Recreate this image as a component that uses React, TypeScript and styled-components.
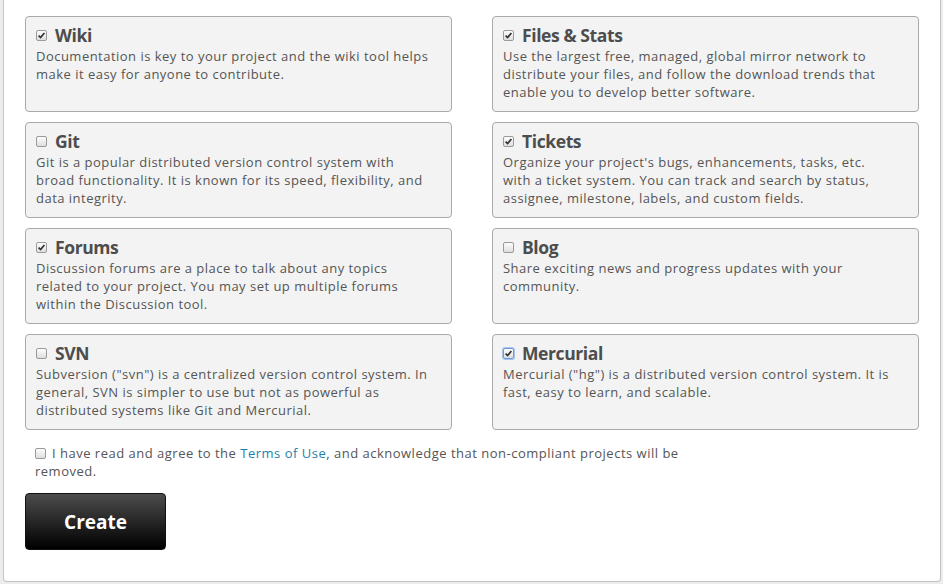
import React from 'react';
import styled, { createGlobalStyle } from 'styled-components';

const GlobalStyle = createGlobalStyle`
  html, body {
    margin: 0;
    padding: 0;
    background: #ececec;
  }
  body {
    font-family: 'Open Sans', 'DejaVu Sans', sans-serif;
    color: #555;
  }
`;

type Tool = {
  name: string;
  checked: boolean;
  focused?: boolean;
  text: string;
};

const tools: Tool[] = [
  {
    name: 'Wiki',
    checked: true,
    text: 'Documentation is key to your project and the wiki tool helps make it easy for anyone to contribute.',
  },
  {
    name: 'Files & Stats',
    checked: true,
    text: 'Use the largest free, managed, global mirror network to distribute your files, and follow the download trends that enable you to develop better software.',
  },
  {
    name: 'Git',
    checked: false,
    text: 'Git is a popular distributed version control system with broad functionality. It is known for its speed, flexibility, and data integrity.',
  },
  {
    name: 'Tickets',
    checked: true,
    text: "Organize your project's bugs, enhancements, tasks, etc. with a ticket system. You can track and search by status, assignee, milestone, labels, and custom fields.",
  },
  {
    name: 'Forums',
    checked: true,
    text: 'Discussion forums are a place to talk about any topics related to your project. You may set up multiple forums within the Discussion tool.',
  },
  {
    name: 'Blog',
    checked: false,
    text: 'Share exciting news and progress updates with your community.',
  },
  {
    name: 'SVN',
    checked: false,
    text: 'Subversion ("svn") is a centralized version control system. In general, SVN is simpler to use but not as powerful as distributed systems like Git and Mercurial.',
  },
  {
    name: 'Mercurial',
    checked: true,
    focused: true,
    text: 'Mercurial ("hg") is a distributed version control system. It is fast, easy to learn, and scalable.',
  },
];

const Check: React.FC<{ checked: boolean; focused?: boolean }> = ({ checked, focused }) => (
  <CheckBox $focused={focused}>
    {checked && (
      <svg width="9" height="9" viewBox="0 0 9 9">
        <path d="M1.6 4.6 L3.6 6.6 L7.4 2" fill="none" stroke="#333" strokeWidth="1.7" />
      </svg>
    )}
  </CheckBox>
);

export default function App() {
  return (
    <>
      <GlobalStyle />
      <Panel>
        <ToolGrid>
          {tools.map((t) => (
            <Card key={t.name}>
              <CardTitle>
                <Check checked={t.checked} focused={t.focused} />
                {t.name}
              </CardTitle>
              <CardText>{t.text}</CardText>
            </Card>
          ))}
        </ToolGrid>
        <Agreement>
          <Check checked={false} />
          I have read and agree to the <a href="#terms">Terms of Use</a>, and acknowledge that
          non-compliant projects will be removed.
        </Agreement>
        <CreateButton type="button">Create</CreateButton>
      </Panel>
    </>
  );
}

const Panel = styled.div`
  margin: 0 2px 2px 3px;
  background: #fff;
  border: 1px solid #c4c4c4;
  border-top: none;
  border-radius: 0 0 4px 4px;
  padding: 16px 21px 31px 21px;
`;

const ToolGrid = styled.div`
  display: grid;
  grid-template-columns: 427px 427px;
  column-gap: 40px;
  row-gap: 10px;
`;

const Card = styled.div`
  box-sizing: border-box;
  height: 96px;
  padding: 7px 22px 7px 10px;
  background: #f3f3f3;
  border: 1px solid #a9a9a9;
  border-radius: 4px;
`;

const CardTitle = styled.h3`
  margin: 0;
  font-size: 17.5px;
  line-height: 22px;
  font-weight: 700;
  color: #4d4d4d;
  display: flex;
  align-items: center;
  letter-spacing: -0.4px;
`;

const CheckBox = styled.span<{ $focused?: boolean }>`
  box-sizing: border-box;
  display: inline-flex;
  align-items: center;
  justify-content: center;
  width: 11px;
  height: 11px;
  margin-right: 8px;
  flex: none;
  border: 1px solid ${(p) => (p.$focused ? '#6f9ad6' : '#9a9a9a')};
  box-shadow: ${(p) => (p.$focused ? '0 0 0 1px #a9c4ec' : 'none')};
  border-radius: 2px;
  background: linear-gradient(#fdfdfd, #dedede);
  vertical-align: -1px;
`;

const CardText = styled.p`
  margin: 1px 0 0;
  font-size: 13px;
  line-height: 18px;
  letter-spacing: 0.48px;
  color: #555;
`;

const Agreement = styled.p`
  margin: 14px 0 0;
  padding-left: 10px;
  width: 680px;
  font-size: 13px;
  line-height: 18px;
  letter-spacing: 0.5px;
  color: #555;

  ${CheckBox} {
    margin-right: 6px;
  }

  a {
    color: #1d7fae;
    text-decoration: none;
  }
`;

const CreateButton = styled.button`
  display: block;
  margin-top: 13px;
  width: 141px;
  height: 57px;
  border: 1px solid #111;
  border-radius: 4px;
  background: linear-gradient(#4c4c4c, #000);
  color: #fff;
  font-family: 'Open Sans', 'DejaVu Sans', sans-serif;
  font-weight: 700;
  font-size: 19px;
  cursor: pointer;
`;
